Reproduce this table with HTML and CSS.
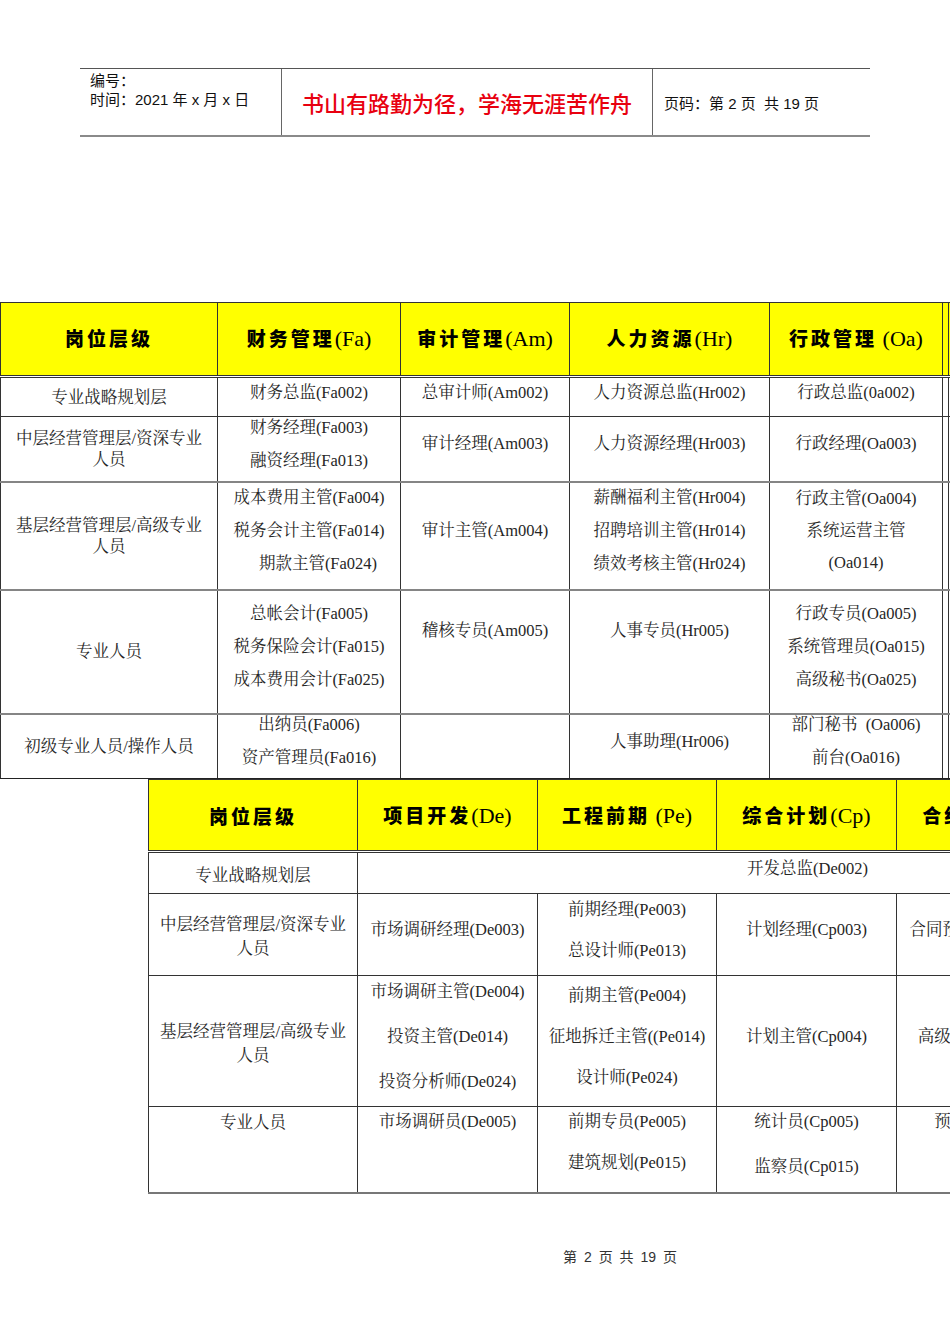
FILE: index.html
```html
<!DOCTYPE html>
<html lang="zh-CN">
<head>
<meta charset="utf-8">
<title>岗位层级</title>
<link rel="stylesheet" href="styles.css">
</head>
<body>
<div class="doc-head">
  <div class="dh-left">
    <div>编号：</div>
    <div>时间：2021 年 x 月 x 日</div>
  </div>
  <div class="dh-mid">书山有路勤为径，学海无涯苦作舟</div>
  <div class="dh-right">页码：第 2 页&nbsp;&nbsp;共 19 页</div>
</div>

<div class="clip">
  <table class="tbl t1">
    <colgroup>
      <col class="w217"><col class="w183"><col class="w169"><col class="w200"><col class="w173"><col class="w6"><col class="w180">
    </colgroup>
    <tr class="hd">
      <th><span class="th-cn">岗位层级</span></th>
      <th><span class="th-cn">财务管理</span><span class="th-en">(Fa)</span></th>
      <th><span class="th-cn">审计管理</span><span class="th-en">(Am)</span></th>
      <th><span class="th-cn">人力资源</span><span class="th-en">(Hr)</span></th>
      <th><span class="th-cn">行政管理</span><span class="th-en"> (Oa)</span></th>
      <th></th>
      <th><span class="th-cn">合约管理</span><span class="th-en">(Ct)</span></th>
    </tr>
    <tr class="r40">
      <td class="lbl">专业战略规划层</td>
      <td><div class="lines lh33"><p>财务总监(Fa002)</p></div></td>
      <td><div class="lines lh33"><p>总审计师(Am002)</p></div></td>
      <td><div class="lines lh33"><p>人力资源总监(Hr002)</p></div></td>
      <td><div class="lines lh33"><p>行政总监(0a002)</p></div></td>
      <td></td>
      <td></td>
    </tr>
    <tr class="r65">
      <td class="lbl">中层经营管理层/资深专业人员</td>
      <td><div class="lines lh33"><p>财务经理(Fa003)</p><p>融资经理(Fa013)</p></div></td>
      <td><div class="lines lh33"><p>审计经理(Am003)</p></div></td>
      <td><div class="lines lh33"><p>人力资源经理(Hr003)</p></div></td>
      <td><div class="lines lh33"><p>行政经理(Oa003)</p></div></td>
      <td></td>
      <td></td>
    </tr>
    <tr class="r108 gl">
      <td class="lbl">基层经营管理层/高级专业人员</td>
      <td><div class="lines lh33"><p>成本费用主管(Fa004)</p><p>税务会计主管(Fa014)</p><p class="ind">期款主管(Fa024)</p></div></td>
      <td><div class="lines lh33"><p>审计主管(Am004)</p></div></td>
      <td><div class="lines lh33"><p>薪酬福利主管(Hr004)</p><p>招聘培训主管(Hr014)</p><p>绩效考核主管(Hr024)</p></div></td>
      <td><div class="lines lh32"><p>行政主管(Oa004)</p><p>系统运营主管</p><p>(Oa014)</p></div></td>
      <td></td>
      <td></td>
    </tr>
    <tr class="r124 gl">
      <td class="lbl">专业人员</td>
      <td><div class="lines lh33"><p>总帐会计(Fa005)</p><p>税务保险会计(Fa015)</p><p>成本费用会计(Fa025)</p></div></td>
      <td><div class="lines lh33"><p>稽核专员(Am005)</p><p>&nbsp;</p></div></td>
      <td><div class="lines lh33"><p>人事专员(Hr005)</p><p>&nbsp;</p></div></td>
      <td><div class="lines lh33"><p>行政专员(Oa005)</p><p>系统管理员(Oa015)</p><p>高级秘书(Oa025)</p></div></td>
      <td></td>
      <td></td>
    </tr>
    <tr class="r65 gl last">
      <td class="lbl">初级专业人员/操作人员</td>
      <td><div class="lines lh33"><p>出纳员(Fa006)</p><p>资产管理员(Fa016)</p></div></td>
      <td></td>
      <td><div class="lines lh33"><p>人事助理(Hr006)</p></div></td>
      <td><div class="lines lh33"><p>部门秘书&nbsp;&nbsp;(Oa006)</p><p>前台(Oa016)</p></div></td>
      <td></td>
      <td></td>
    </tr>
  </table>

  <table class="tbl t2">
    <colgroup>
      <col class="w209"><col class="w180"><col class="w179"><col class="w180"><col class="w180"><col class="w181">
    </colgroup>
    <tr class="hd">
      <th><span class="th-cn">岗位层级</span></th>
      <th><span class="th-cn">项目开发</span><span class="th-en">(De)</span></th>
      <th><span class="th-cn">工程前期</span><span class="th-en"> (Pe)</span></th>
      <th><span class="th-cn">综合计划</span><span class="th-en">(Cp)</span></th>
      <th><span class="th-cn">合约预算</span><span class="th-en">(Cb)</span></th>
      <th><span class="th-cn">成本管理</span><span class="th-en">(Co)</span></th>
    </tr>
    <tr class="r42">
      <td class="lbl">专业战略规划层</td>
      <td colspan="5"><div class="lines lh33"><p>开发总监(De002)</p></div></td>
    </tr>
    <tr class="r82">
      <td class="lbl">中层经营管理层/资深专业人员</td>
      <td><div class="lines lh41"><p>市场调研经理(De003)</p></div></td>
      <td><div class="lines lh41"><p>前期经理(Pe003)</p><p>总设计师(Pe013)</p></div></td>
      <td><div class="lines lh41"><p>计划经理(Cp003)</p></div></td>
      <td><div class="lines lh41"><p>合同预算经理(Cb003)</p></div></td>
      <td><div class="lines lh41"><p>成本经理(Co003)</p></div></td>
    </tr>
    <tr class="r131">
      <td class="lbl">基层经营管理层/高级专业人员</td>
      <td><div class="lines lh45"><p>市场调研主管(De004)</p><p>投资主管(De014)</p><p>投资分析师(De024)</p></div></td>
      <td><div class="lines lh41"><p>前期主管(Pe004)</p><p>征地拆迁主管((Pe014)</p><p>设计师(Pe024)</p></div></td>
      <td><div class="lines lh41"><p>计划主管(Cp004)</p></div></td>
      <td><div class="lines lh41"><p>高级预算员(Cb004)</p></div></td>
      <td><div class="lines lh41"><p>成本主管(Co004)</p></div></td>
    </tr>
    <tr class="r86 top gl">
      <td class="lbl">专业人员</td>
      <td><div class="lines lh41"><p>市场调研员(De005)</p></div></td>
      <td><div class="lines lh41"><p>前期专员(Pe005)</p><p>建筑规划(Pe015)</p></div></td>
      <td><div class="lines lh45"><p>统计员(Cp005)</p><p>监察员(Cp015)</p></div></td>
      <td><div class="lines lh41"><p>预算员(Cb005)</p></div></td>
      <td><div class="lines lh41"><p>成本专员(Co005)</p></div></td>
    </tr>
  </table>
</div>

<div class="foot">第 2 页 共 19 页</div>
</body>
</html>
```

FILE: styles.css
```css
html, body {
  margin: 0;
  padding: 0;
  background: #ffffff;
}

body {
  width: 950px;
  font-family: "Liberation Serif", "Noto Serif CJK SC", "Noto Sans CJK SC", serif;
  color: #262626;
}

/* ---------- document header ---------- */
.doc-head {
  display: flex;
  width: 790px;
  height: 66px;
  margin: 68px 0 0 80px;
  border-top: 1px solid #555;
  border-bottom: 2px solid #8a8a8a;
  font-family: "Liberation Sans", "Noto Sans CJK SC", sans-serif;
  font-size: 15px;
  color: #111;
}

.dh-left {
  width: 191px;
  padding: 2px 0 0 10px;
  line-height: 19px;
}

.dh-mid {
  width: 372px;
  display: flex;
  align-items: center;
  justify-content: center;
  box-sizing: border-box;
  border-left: 1px solid #666;
  border-right: 1px solid #666;
  font-family: "Noto Sans CJK SC", sans-serif;
  font-weight: 500;
  font-size: 22px;
  color: #e8000f;
}

.dh-right {
  flex: 1;
  display: flex;
  align-items: center;
  padding: 1px 0 0 11px;
}

/* ---------- tables ---------- */
.clip {
  width: 950px;
  overflow: hidden;
  margin-top: 165px;
}

.tbl {
  border-collapse: collapse;
  table-layout: fixed;
}

.t1 {
  width: 1128px;
  border-top: 1px solid #444;
}

.t2 {
  width: 1109px;
  margin-left: 148px;
}

.w217 { width: 217px; }
.w183 { width: 183px; }
.w169 { width: 169px; }
.w200 { width: 200px; }
.w173 { width: 173px; }
.w6 { width: 6px; }
.w180 { width: 180px; }
.w209 { width: 209px; }
.w179 { width: 179px; }
.w181 { width: 181px; }

.tbl th,
.tbl td {
  border: 1px solid #333;
  padding: 0 8px;
  text-align: center;
  vertical-align: middle;
  font-size: 16.5px;
  overflow: hidden;
}

.tbl th {
  background: #ffff00;
  font-weight: normal;
  color: #000;
  white-space: nowrap;
  border-bottom: 3px double #333;
}

.t1 th {
  padding-bottom: 3px;
}

.t1 .hd th:nth-child(6) {
  padding: 0;
}

.th-cn {
  font-family: "Noto Sans CJK SC", sans-serif;
  font-weight: 900;
  font-size: 19px;
  letter-spacing: 3px;
}

.th-en {
  font-family: "Liberation Serif", serif;
  font-size: 22px;
}

.hd { height: 74px; }
.t2 .hd { height: 72px; }
.r40 { height: 40px; }
.r42 { height: 42px; }
.r65 { height: 65px; }
.r82 { height: 82px; }
.r86 { height: 86px; }
.r108 { height: 108px; }
.r124 { height: 124px; }
.r131 { height: 131px; }

.gl > td {
  border-top: 2px solid #858585;
}

.t1 .last > td {
  border-bottom: 1px solid #222;
}

.t2 .gl > td {
  border-top: 1px solid #444;
  border-bottom: 2px solid #777;
}

.lbl {
  line-height: 21px;
}

.t2 .lbl {
  line-height: 24px;
  padding-top: 5px;
}

.lines {
  margin-top: -10px;
}

.lines p {
  margin: 0;
  white-space: nowrap;
}

.lh32 { --lh: 32px; line-height: var(--lh); }
.lh33 { --lh: 33px; line-height: var(--lh); }
.lh41 { --lh: 41px; line-height: var(--lh); }
.lh45 { --lh: 45px; line-height: var(--lh); }

.ind {
  padding-left: 18px;
}

.top > td {
  vertical-align: top;
}

.top .lines {
  margin-top: calc(14px - var(--lh) / 2);
}

.t2 .top .lbl {
  padding-top: 4px;
}

/* ---------- footer ---------- */
.foot {
  margin-top: 53px;
  padding-left: 290px;
  text-align: center;
  font-family: "Liberation Sans", "Noto Sans CJK SC", sans-serif;
  font-size: 14px;
  line-height: 20px;
  word-spacing: 3px;
  color: #333;
}
```
